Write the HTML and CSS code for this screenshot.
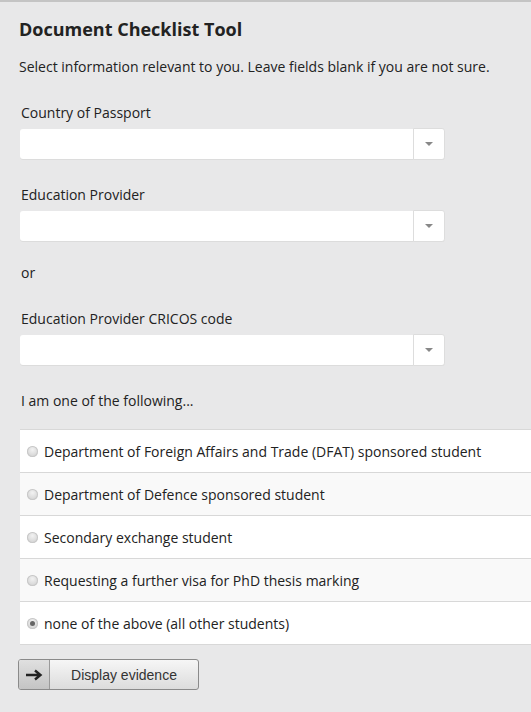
FILE: index.html
```html
<!DOCTYPE html>
<html>
<head>
<meta charset="utf-8">
<link rel="stylesheet" href="styles.css">
</head>
<body>
<div class="page">
  <h1 class="title">Document Checklist Tool</h1>
  <p class="intro">Select information relevant to you. Leave fields blank if you are not sure.</p>

  <div class="field">
    <label class="label">Country of Passport</label>
    <div class="select"><span class="select-value"></span><span class="select-arrow"><span class="tri"></span></span></div>
  </div>

  <div class="field">
    <label class="label">Education Provider</label>
    <div class="select"><span class="select-value"></span><span class="select-arrow"><span class="tri"></span></span></div>
  </div>

  <p class="or">or</p>

  <div class="field">
    <label class="label">Education Provider CRICOS code</label>
    <div class="select"><span class="select-value"></span><span class="select-arrow"><span class="tri"></span></span></div>
  </div>

  <p class="following">I am one of the following...</p>

  <ul class="options">
    <li class="option"><span class="radio"></span>Department of Foreign Affairs and Trade (DFAT) sponsored student</li>
    <li class="option"><span class="radio"></span>Department of Defence sponsored student</li>
    <li class="option"><span class="radio"></span>Secondary exchange student</li>
    <li class="option"><span class="radio"></span>Requesting a further visa for PhD thesis marking</li>
    <li class="option"><span class="radio checked"></span>none of the above (all other students)</li>
  </ul>

  <button class="btn"><span class="btn-icon"><svg width="18" height="12" viewBox="0 0 18 12"><path d="M1 6 H15 M10 1.5 L15.5 6 L10 10.5" fill="none" stroke="#222" stroke-width="2.4" stroke-linecap="butt" stroke-linejoin="miter"/></svg></span><span class="btn-text">Display evidence</span></button>
</div>
</body>
</html>
```

FILE: styles.css
```css
html, body {
  margin: 0;
  padding: 0;
}
body {
  background: #e8e8e9;
  font-family: "Open Sans", "DejaVu Sans", sans-serif;
  color: #222;
  overflow: hidden;
  width: 531px;
  height: 712px;
  border-top: 2px solid #c4c4c4;
  box-sizing: border-box;
}
.page {
  padding: 0 0 0 19px;
}
.title {
  margin: 0;
  padding-top: 15px;
  font-size: 18px;
  font-weight: 700;
  line-height: 24px;
  color: #222;
}
.intro {
  margin: 16px 0 0 0;
  font-size: 14px;
  line-height: 20px;
}
.field {
  margin-top: 26px;
  padding-left: 1px;
}
.label {
  display: block;
  font-size: 14px;
  line-height: 20px;
  margin-left: 1px;
}
.select {
  margin-top: 6px;
  width: 425px;
  height: 30px;
  display: flex;
  background: #fff;
  border-radius: 3px;
  box-shadow: 0 1px 0 #dcdcdc;
}
.select-value {
  flex: 1;
}
.select-arrow {
  width: 30px;
  margin: -1px 0;
  border: 1px solid #ddd;
  border-radius: 0 3px 3px 0;
  background: #fff;
  display: flex;
  align-items: center;
  justify-content: center;
}
.tri {
  width: 0;
  height: 0;
  border-left: 4px solid transparent;
  border-right: 4px solid transparent;
  border-top: 4px solid #888;
}
.or {
  margin: 22px 0 0 2px;
  font-size: 14px;
  line-height: 20px;
}
.following {
  margin: 26px 0 0 2px;
  font-size: 14px;
  line-height: 20px;
}
.options {
  list-style: none;
  margin: 18px 0 0 1px;
  padding: 0;
  border-top: 1px solid #d8d8d8;
}
.option {
  display: flex;
  align-items: center;
  height: 42px;
  border-bottom: 1px solid #d8d8d8;
  background: #fff;
  font-size: 14px;
  padding-left: 7px;
}
.option:nth-child(even) {
  background: #f9f9f9;
}
.radio {
  width: 11px;
  height: 11px;
  border-radius: 50%;
  background: radial-gradient(circle at 50% 35%, #f2f2f2 0%, #d6d6d6 70%, #c4c4c4 100%);
  box-shadow: inset 0 0 0 1px #c8c8c8;
  margin-right: 6px;
  position: relative;
}
.radio.checked::after {
  content: "";
  position: absolute;
  left: 3px;
  top: 3px;
  width: 5px;
  height: 5px;
  border-radius: 50%;
  background: #666;
}
.btn {
  margin-top: 14px;
  margin-left: -1px;
  display: flex;
  align-items: stretch;
  width: 181px;
  height: 31px;
  padding: 0;
  border: 1px solid #8a8a8a;
  border-radius: 3px;
  background: linear-gradient(#f6f6f6, #dcdcdc);
  font-family: "Liberation Sans", Arial, sans-serif;
  font-size: 14px;
  color: #333;
  overflow: hidden;
}
.btn-icon {
  width: 30px;
  border-right: 1px solid #9a9a9a;
  background: linear-gradient(#e0e0e0, #c4c4c4);
  display: flex;
  align-items: center;
  justify-content: center;
}
.btn-text {
  flex: 1;
  display: flex;
  align-items: center;
  justify-content: center;
}
```
